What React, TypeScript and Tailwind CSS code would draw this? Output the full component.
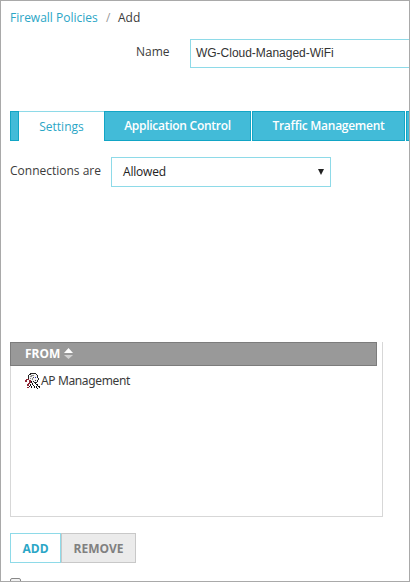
import type { ReactNode } from "react";

function Tab({ width, children }: { width: string; children?: ReactNode }) {
  return (
    <div className={`${width} h-[30px] shrink-0 overflow-hidden whitespace-nowrap border border-[#12a5c5] bg-[#42bbd8] text-center text-[12px] font-semibold leading-[28px] tracking-[-0.27px] text-white`}>
      {children}
    </div>
  );
}

function PersonIcon() {
  return (
    <svg className="shrink-0" width="16" height="16" viewBox="0 0 16 16" shapeRendering="crispEdges" fill="none">
      <path d="M5 1h6v1h2v6h-2v2H6V8H4V3h1z" fill="#f2f2f2" />
      <path d="M5 0h6v1H5zM4 1h2v1H4zM3 2h1v5H3zM11 1h1v1h-1zM12 2h1v3h-1zM13 5h1v2h-1zM12 7h1v2h-1zM9 9h3v1H9zM8 8h1v1H8zM4 7h1v1H4z" fill="#222" />
      <path d="M6 2h3v1H6zM5 3h2v1H5zM5 5h1v1H5zM7 5h1v2H7z" fill="#888" />
      <path d="M8 4h1v1H8zM10 7h1v1h-1z" fill="#444" />
      <path d="M10 4h1v1h-1z" fill="#2d2dcc" />
      <path d="M1 6h3v1H1zM0 7h2v2H0zM4 7h2v3H4zM3 10h2v1H3zM2 11h2v2H2zM2 14h2v1H2z" fill="#8f2635" />
      <path d="M6 8h1v2H6zM7 10h1v2H7zM8 12h1v1H8zM9 13h1v2H9zM10 10h1v1h-1zM11 11h2v1h-2zM12 12h1v1h-1zM13 13h2v1h-2zM14 14h1v1h-1zM11 13h1v2h-1zM12 15h1v1h-1zM5 11h1v2H5zM4 13h1v1H4zM6 13h1v2H6z" fill="#111" />
    </svg>
  );
}

export default function App() {
  return (
    <div className="h-[582px] w-[410px] overflow-hidden border border-[#a9a9a9] bg-white font-['Open_Sans',sans-serif] text-[12px] text-[#3b3b3b]">
      <div className="ml-[9px] mt-[9px] flex h-4 items-center leading-4">
        <span className="w-[88px] whitespace-nowrap text-[#2ba6c6]">Firewall Policies</span>
        <span className="ml-2 w-[12px] text-[#999]">/</span>
        <span>Add</span>
      </div>
      <div className="mt-[13px] flex h-[30px]">
        <div className="ml-[135px] w-[54px] leading-[26px]">Name</div>
        <div className="h-[29px] flex-1 border border-r-0 border-[#8edae8] pl-[5px] font-['Liberation_Sans',sans-serif] text-[12px] leading-[27px] tracking-[-0.02px] text-[#333]">WG-Cloud-Managed-WiFi</div>
      </div>
      <div className="ml-[9px] mt-[42px] flex h-[31px] items-start overflow-hidden">
        <Tab width="w-[9px]" />
        <div className="h-[30px] w-[85px] shrink-0 border-t border-[#8edae8] text-center leading-[30px] text-[#2ba6c6]">Settings</div>
        <Tab width="w-[147px]">Application Control</Tab>
        <div className="w-px shrink-0" />
        <Tab width="w-[153px]">Traffic Management</Tab>
        <div className="w-px shrink-0" />
        <Tab width="w-[10px]" />
      </div>
      <div className="ml-[9px] mt-[15px] flex h-[30px]">
        <div className="w-[101px] whitespace-nowrap leading-[27px]">Connections are</div>
        <div className="flex h-[30px] w-[220px] items-center justify-between border border-[#8edae8] pl-[11px] pr-[6px] text-[#222]">
          <span className="tracking-[-0.2px]">Allowed</span>
          <svg width="6" height="6" viewBox="0 0 6 6"><path d="M0 0h6L3 6z" fill="#222" /></svg>
        </div>
      </div>
      <div className="ml-[9px] mt-[155px] h-[175px] w-[373px] border border-t-0 border-[#d7d7d7] font-['Noto_Sans',sans-serif]">
        <div className="-ml-px flex h-6 w-[367px] items-center border border-[#7c7c7c] bg-[#999] pl-[14px] text-[12px] font-bold text-white">
          <span className="w-[36px]">FROM</span>
          <svg className="ml-[3px]" width="9" height="12" viewBox="0 0 9 12"><path d="M0 5l4.5-5L9 5z" fill="#fff" /><path d="M0 7h9l-4.5 4z" fill="#d1d1d1" /></svg>
        </div>
        <div className="ml-[14px] mt-[7px] flex h-4 items-center leading-4">
          <PersonIcon />
          <span className="tracking-[-0.37px]">AP Management</span>
        </div>
      </div>
      <div className="ml-[9px] mt-4 flex h-[30px] text-center text-[12px] font-bold leading-[29px]">
        <div className="w-[51px] border border-[#8edae8] text-[#2ba6c6]">ADD</div>
        <div className="w-[75px] border border-[#c8c8c8] bg-[#ebebeb] text-[#808080]">REMOVE</div>
      </div>
      <div className="ml-[9px] mt-[15px] h-[11px] w-[11px] rounded-[2px] border border-[#888] bg-[#f2f2f2]" />
    </div>
  );
}
